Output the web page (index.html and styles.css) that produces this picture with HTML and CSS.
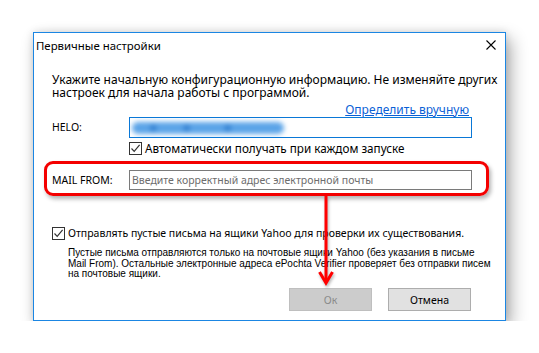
FILE: index.html
```html
<!DOCTYPE html>
<html lang="ru">
<head>
<meta charset="utf-8">
<title>Первичные настройки</title>
<link rel="stylesheet" href="styles.css">
</head>
<body>
<div class="dialog">
  <div class="titlebar">
    <span class="title">Первичные настройки</span>
    <svg class="close" width="10" height="10" viewBox="0 0 10 10"><path d="M0.5 0.5 L9.5 9.5 M9.5 0.5 L0.5 9.5" stroke="#000" stroke-width="1.1" fill="none"/></svg>
  </div>
  <div class="content">
    <p class="intro">Укажите начальную конфигурационную информацию. Не изменяйте других<br>настроек для начала работы с программой.</p>
    <div class="link-row"><a class="link" href="#">Определить вручную</a></div>
    <div class="field-row">
      <span class="label">HELO:</span>
      <div class="input focused"><span class="blurred"></span></div>
    </div>
    <div class="check-row indented">
      <span class="cb"><svg width="11" height="11" viewBox="0 0 11 11"><path d="M1.5 5.5 L4.2 8.3 L9.6 1.8" stroke="#333" stroke-width="1.2" fill="none"/></svg></span>
      <span class="auto-text">Автоматически получать при каждом запуске</span>
    </div>
    <div class="field-row mail">
      <span class="label">MAIL FROM:</span>
      <div class="input"><span class="placeholder">Введите корректный адрес электронной почты</span></div>
    </div>
    <div class="check-row yahoo">
      <span class="cb"><svg width="11" height="11" viewBox="0 0 11 11"><path d="M1.5 5.5 L4.2 8.3 L9.6 1.8" stroke="#333" stroke-width="1.2" fill="none"/></svg></span>
      <span>Отправлять пустые письма на ящики Yahoo для проверки их существования.</span>
    </div>
    <p class="note">Пустые письма отправляются только на почтовые ящики Yahoo (без указания в письме<br>Mail From). Остальные электронные адреса ePochta Verifier проверяет без отправки писем<br>на почтовые ящики.</p>
    <div class="buttons">
      <button class="btn disabled" type="button">Ок</button>
      <button class="btn" type="button">Отмена</button>
    </div>
  </div>
  <svg class="arrow" width="18" height="92" viewBox="0 0 18 92">
    <path d="M8 0 L8 86" stroke="#f00" stroke-width="3" fill="none"/>
    <path d="M1.5 76 L8 87 L14.5 76" stroke="#f00" stroke-width="3" fill="none" stroke-linejoin="miter"/>
  </svg>
</div>
</body>
</html>
```
FILE: styles.css
```css
body {
  margin: 0;
  background: #fff;
  font-family: "Noto Sans", "Open Sans", sans-serif;
  font-size: 12px;
  line-height: 13px;
  color: #000;
}

.dialog {
  position: relative;
  box-sizing: border-box;
  width: 473px;
  height: 289px;
  margin: 32px 0 0 33px;
  border: 1px solid #1b86e3;
  background: #fff;
  box-shadow: 5px 7px 16px rgba(0, 0, 0, 0.32), 0 0 8px rgba(0, 0, 0, 0.12);
  display: flex;
  flex-direction: column;
}

.titlebar {
  height: 24px;
  display: flex;
  align-items: center;
  justify-content: space-between;
  padding: 0 9px 0 2px;
}

.title {
  font-size: 11.4px;
}

.close {
  display: block;
}

.content {
  flex: 1;
  display: flex;
  flex-direction: column;
  padding: 0 33px 9px 18px;
}

.intro {
  margin: 16px 0 0;
  white-space: nowrap;
}

.link-row {
  display: flex;
  justify-content: flex-end;
  margin-top: 4px;
  padding-right: 3px;
}

.link {
  color: #0a5fd6;
  text-decoration: underline;
}

.field-row {
  display: flex;
  align-items: center;
  margin-top: 1px;
}

.label {
  width: 77px;
  flex: none;
  font-size: 10.5px;
}

.input {
  box-sizing: border-box;
  flex: 1;
  height: 21px;
  border: 1px solid #7a7a7a;
  background: #fff;
  display: flex;
  align-items: center;
  padding-left: 2px;
  overflow: hidden;
}

.input.focused {
  border-color: #0a78d7;
}

.blurred {
  display: block;
  width: 152px;
  height: 12px;
  border-radius: 6px;
  background:
    radial-gradient(circle at 14% 50%, #2a78cc 0, #2a78cc 2px, transparent 4px),
    radial-gradient(circle at 36% 50%, #2a78cc 0, #2a78cc 2px, transparent 4px),
    radial-gradient(circle at 63% 50%, #2a78cc 0, #2a78cc 2px, transparent 4px),
    #5ba4e8;
  filter: blur(2.5px);
}

.placeholder {
  color: #6d6d6d;
  white-space: nowrap;
  font-size: 10.5px;
}

.check-row {
  display: flex;
  align-items: center;
  gap: 3px;
  white-space: nowrap;
  font-size: 10.5px;
}

.check-row.indented {
  margin-top: 4px;
  padding-left: 77px;
}

.auto-text {
  font-size: 11.7px;
}

.cb {
  box-sizing: border-box;
  width: 13px;
  height: 13px;
  flex: none;
  border: 1px solid #333;
  background: #fff;
  display: flex;
  align-items: center;
  justify-content: center;
}

.cb svg {
  display: block;
}

.field-row.mail {
  position: relative;
  margin-top: 15px;
  height: 20px;
}

.field-row.mail .input {
  height: 20px;
}

.field-row.mail::after {
  content: "";
  position: absolute;
  top: -9px;
  left: -8px;
  right: -17px;
  bottom: -6px;
  border: 3px solid #f40000;
  border-radius: 9px;
  box-shadow: 2px 3px 4px rgba(0, 0, 0, 0.3);
  pointer-events: none;
}

.check-row.yahoo {
  margin-top: 37px;
}

.note {
  margin: 8px 0 0 16px;
  font-family: "Liberation Sans", Arial, sans-serif;
  font-size: 10px;
  line-height: 10.5px;
  white-space: nowrap;
}

.buttons {
  margin-top: auto;
  display: flex;
  justify-content: flex-end;
  gap: 16px;
  padding-right: 1px;
}

.btn {
  box-sizing: border-box;
  width: 83px;
  height: 23px;
  border: 1px solid #adadad;
  background: #e1e1e1;
  font-family: "Noto Sans", "Open Sans", sans-serif;
  font-size: 10.5px;
  color: #000;
  padding: 0;
}

.btn.disabled {
  border-color: #bfbfbf;
  background: #cccccc;
  color: #8a8a8a;
}

.arrow {
  position: absolute;
  left: 284px;
  top: 163px;
  filter: drop-shadow(1px 2px 1.5px rgba(0, 0, 0, 0.3));
}
```
